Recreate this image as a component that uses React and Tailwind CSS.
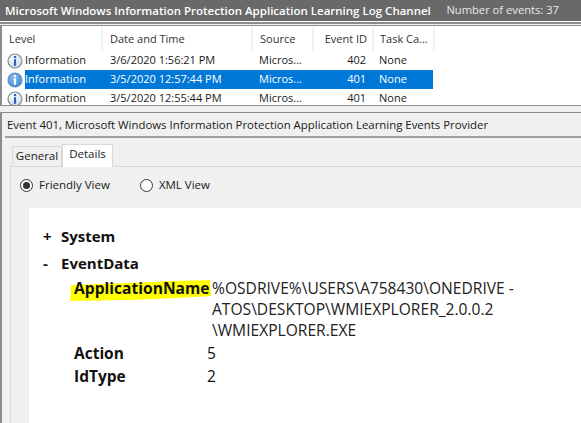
const font = { fontFamily: '"Open Sans", "Noto Sans", sans-serif' }

const rows = [
  { date: '3/6/2020 1:56:21 PM', id: '402' },
  { date: '3/5/2020 12:57:44 PM', id: '401', selected: true },
  { date: '3/5/2020 12:55:44 PM', id: '401' },
]

function InfoIcon({ selected }) {
  return (
    <svg width="16" height="16" viewBox="0 0 16 16" className="shrink-0">
      <defs>
        <radialGradient id="infoFill" cx="0.4" cy="0.35" r="0.8">
          <stop offset="0" stopColor="#ffffff" />
          <stop offset="1" stopColor="#bcd3ee" />
        </radialGradient>
        <radialGradient id="infoFillSel" cx="0.4" cy="0.35" r="0.8">
          <stop offset="0" stopColor="#8fbcec" />
          <stop offset="1" stopColor="#2f7fd2" />
        </radialGradient>
      </defs>
      <circle cx="8" cy="8" r="7" fill={selected ? 'url(#infoFillSel)' : 'url(#infoFill)'} stroke={selected ? '#5d8fc4' : '#8a8a8a'} strokeWidth="1.2" />
      <rect x="6.9" y="3" width="2.2" height="2.1" fill={selected ? '#ffffff' : '#2a62b0'} />
      <rect x="6.9" y="6.2" width="2.2" height="6.6" fill={selected ? '#ffffff' : '#2a62b0'} />
    </svg>
  )
}

function Row({ row }) {
  const sel = row.selected
  const text = sel ? 'text-white' : 'text-[#1a1a1a]'
  return (
    <div className={`flex h-[19px] shrink-0 items-center text-[11px] ${text}`}>
      <div className="flex w-[100px] items-center">
        <span className="ml-[5px]"><InfoIcon selected={sel} /></span>
        <span className={`ml-[2px] flex h-[19px] flex-1 items-center ${sel ? 'bg-[#0078d7]' : ''}`}>Information</span>
      </div>
      <div className={`flex h-[19px] w-[150px] items-center pl-[8px] ${sel ? 'bg-[#0078d7]' : ''}`}>{row.date}</div>
      <div className={`flex h-[19px] w-[61px] items-center pl-[7px] ${sel ? 'bg-[#0078d7]' : ''}`}>Micros...</div>
      <div className={`flex h-[19px] w-[59px] items-center justify-end pr-[6px] ${sel ? 'bg-[#0078d7]' : ''}`}>{row.id}</div>
      <div className={`flex h-[19px] w-[61px] items-center pl-[7px] ${sel ? 'bg-[#0078d7]' : ''}`}>None</div>
    </div>
  )
}

function Radio({ checked, label, className }) {
  return (
    <div className={`flex items-center gap-[6px] ${className}`}>
      <span className="flex h-[13px] w-[13px] items-center justify-center rounded-full border border-[#333] bg-white">
        {checked && <span className="h-[7px] w-[7px] rounded-full bg-[#333]" />}
      </span>
      <span className="text-[11.5px] text-[#1a1a1a]">{label}</span>
    </div>
  )
}

export default function App() {
  return (
    <div style={font} className="flex h-[423px] w-[581px] flex-col overflow-hidden bg-[#f0f0f0]">
      {/* title bar */}
      <div className="flex h-[21px] shrink-0 items-center justify-between bg-[#696969] pl-[5px] pr-[22px]">
        <span className="whitespace-nowrap text-[11.5px] font-semibold text-white">Microsoft Windows Information Protection Application Learning Log Channel</span>
        <span className="whitespace-nowrap text-[11.2px] text-[#e8e8e8]">Number of events: 37</span>
      </div>
      <div className="h-[1px] shrink-0 bg-white" />
      <div className="h-[2px] shrink-0 bg-[#8c8c8c]" />
      <div className="h-[1px] shrink-0 bg-[#f0f0f0]" />
      <div className="h-[1px] shrink-0 bg-[#8c8c8c]" />

      {/* event list */}
      <div className="flex h-[80px] shrink-0 flex-col overflow-hidden border-b border-l-[2px] border-[#8c8c8c] bg-white">
        <div className="flex h-[25px] shrink-0 items-start pt-px text-[11px] text-[#333]">
          <div className="flex h-[24px] w-[101px] items-center border-r-[2px] border-[#f0f0f0] pl-[7px]">Level</div>
          <div className="flex h-[24px] w-[150px] items-center border-r-[2px] border-[#f0f0f0] pl-[7px]">Date and Time</div>
          <div className="flex h-[24px] w-[61px] items-center border-r-[2px] border-[#f0f0f0] pl-[7px]">Source</div>
          <div className="flex h-[24px] w-[60px] items-center justify-end border-r-[2px] border-[#f0f0f0] pr-[5px]">Event ID</div>
          <div className="flex h-[24px] w-[61px] items-center border-r-[2px] border-[#f0f0f0] pl-[6px]">Task Ca...</div>
        </div>
        {rows.map((row) => (
          <Row key={row.date} row={row} />
        ))}
      </div>
      <div className="h-[6px] shrink-0" />

      {/* preview pane */}
      <div className="flex min-h-0 flex-1 flex-col border-l-[2px] border-t border-[#8c8c8c]">
        <div className="flex h-[23px] shrink-0 items-center pl-[5px] text-[11.4px] text-[#1a1a1a]">
          Event 401, Microsoft Windows Information Protection Application Learning Events Provider
        </div>
        <div className="ml-[3px] h-[2px] shrink-0 bg-[#a0a0a0]" />

        {/* tabs */}
        <div className="ml-[10px] mt-[6px] flex h-[22px] shrink-0 items-end text-[11.5px] text-[#1a1a1a]">
          <div className="flex h-[20px] w-[50px] items-center justify-center border border-b-0 border-[#d9d9d9] pb-px">General</div>
          <div className="relative top-px flex h-[23px] w-[51px] items-center justify-center border border-b-0 border-[#d9d9d9] bg-white pb-[5px]">Details</div>
        </div>
        <div className="ml-[8px] flex min-h-0 flex-1 flex-col border-l border-t border-[#d9d9d9] pl-[18px]">
          <div className="-ml-[9px] flex h-[41px] shrink-0 items-center pb-[5px]">
            <Radio checked label="Friendly View" />
            <Radio label="XML View" className="ml-[30px]" />
          </div>

          {/* friendly view content */}
          <div className="flex-1 bg-white pl-[14px] pt-[17px] text-[#111]">
            <div className="flex h-[22px] items-center text-[15px] font-bold">
              <span className="w-[18px]">+</span>
              <span>System</span>
            </div>
            <div className="mt-[5px] flex h-[22px] items-center text-[15px] font-bold">
              <span className="w-[18px]">-</span>
              <span>EventData</span>
            </div>
            <div className="relative mt-[4px] flex pl-[31px] text-[15.6px] leading-[21px]">
              {/* highlighter stroke */}
              <svg width="146" height="24" viewBox="0 0 146 24" className="absolute left-[25px] top-px">
                <path d="M3 6 L60 4 L105 2 L142 1 L143 17 L108 19 L62 21 L2 22 Z" fill="#ffff00" />
              </svg>
              <span className="relative w-[138px] shrink-0 font-bold">ApplicationName</span>
              <span className="relative w-[330px] text-[#222]">
                %OSDRIVE%\USERS\A758430\ONEDRIVE - ATOS\DESKTOP\WMIEXPLORER_2.0.0.2 \WMIEXPLORER.EXE
              </span>
            </div>
            <div className="mt-[1px] flex h-[23px] items-center pl-[31px] text-[15.5px]">
              <span className="w-[133px] font-bold">Action</span>
              <span>5</span>
            </div>
            <div className="flex h-[23px] items-center pl-[31px] text-[15.5px]">
              <span className="w-[133px] font-bold">IdType</span>
              <span>2</span>
            </div>
          </div>
        </div>
      </div>
    </div>
  )
}
